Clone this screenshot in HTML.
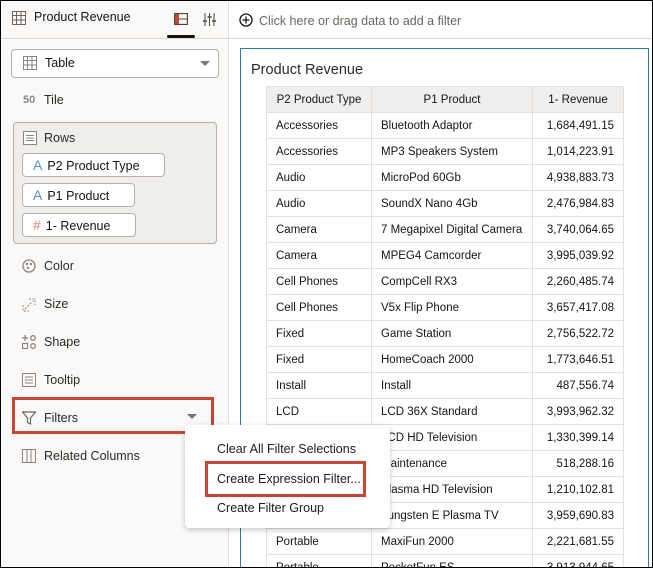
<!DOCTYPE html>
<html style="width:653px;height:568px;overflow:hidden"><head><style>
*{box-sizing:border-box;margin:0;padding:0}
body{width:653px;height:568px;overflow:hidden;font-family:"Liberation Sans",sans-serif;color:#161513;background:#fff;position:relative;font-size:12px}
.frame{position:absolute;left:0;top:0;width:653px;height:568px;border:1px solid #000;pointer-events:none;z-index:50}
.left{position:absolute;left:0;top:0;width:229px;height:568px;background:#fbf9f8;border-right:1px solid #e4e1dd}
.top{position:absolute;left:0;top:0;width:653px;height:39px;border-bottom:1px solid #d9d6d2}
.abs{position:absolute}
.lbl{position:absolute;left:44px;font-size:12.5px;color:#2c2a27}
.pill{position:absolute;left:22px;height:24px;border:1px solid #b5b0aa;border-radius:4px;background:#fff;font-size:12.5px;padding-left:10px;line-height:22px}
.pill b{font-weight:normal;color:#5c90c4;margin-right:5px;font-size:14px}
table{border-collapse:collapse;table-layout:fixed;width:357px;position:absolute;left:266px;top:86px;font-size:11.5px}
td,th{border:1px solid #e4e1dd;height:26px;padding:0 9px;font-weight:normal;white-space:nowrap;overflow:hidden}
th{background:#f1efed;text-align:center}
td.n{text-align:right}
.mi{position:absolute;left:217px;font-size:12.5px;color:#1d1c1a}
</style></head><body>
<div class="left"></div>
<div class="top"></div>
<svg class="abs" style="left:12px;top:11px" width="14" height="14"><rect x="0.5" y="0.5" width="13" height="13" fill="none" stroke="#6b6660"/><path d="M0 4.5H14M0 9H14M4.5 0V14M9 0V14" stroke="#6b6660"/></svg>
<div class="abs" style="left:34px;top:10px;font-size:12.5px">Product Revenue</div>
<svg class="abs" style="left:174px;top:13px" width="14" height="12"><rect x="0.5" y="0.5" width="13" height="11" fill="none" stroke="#4a4641" stroke-width="1.3"/><rect x="1" y="1" width="4" height="10" fill="#c74634"/><path d="M5 6H14" stroke="#4a4641"/></svg>
<div class="abs" style="left:167px;top:35px;width:28px;height:3px;background:#161513;border-radius:2px"></div>
<svg class="abs" style="left:203px;top:13px" width="13" height="13"><path d="M2 0V13M6.5 0V13M11 0V13" stroke="#4a4641"/><path d="M0 8H4M4.5 4H8.5M9 8H13" stroke="#4a4641" stroke-width="1.5"/></svg>
<svg class="abs" style="left:239px;top:13px" width="14" height="14"><circle cx="7" cy="7" r="6" fill="none" stroke="#161513" stroke-width="1.3"/><path d="M7 3.5V10.5M3.5 7H10.5" stroke="#161513" stroke-width="1.3"/></svg>
<div class="abs" style="left:259px;top:14px;font-size:12.5px;color:#6b6660">Click here or drag data to add a filter</div>
<div class="abs" style="left:11px;top:49px;width:208px;height:29px;border:1px solid #b5b0aa;border-radius:4px;background:#fff"></div>
<svg class="abs" style="left:23px;top:56px" width="14" height="14"><rect x="0.5" y="0.5" width="13" height="13" fill="none" stroke="#8a857f"/><path d="M0 4.5H14M0 9H14M4.5 0V14M9 0V14" stroke="#8a857f"/></svg>
<div class="abs" style="left:45px;top:56px;font-size:12.5px">Table</div>
<div class="abs" style="left:200px;top:61px;width:0;height:0;border-left:5px solid transparent;border-right:5px solid transparent;border-top:5px solid #7a756f"></div>
<div class="abs" style="left:23px;top:94px;font-size:11px;color:#8a857f;font-weight:bold">50</div>
<div class="lbl" style="top:93px">Tile</div>
<div class="abs" style="left:13px;top:122px;width:204px;height:122px;background:#f0eeeb;border:1px solid #b5b0aa;border-radius:4px"></div>
<svg class="abs" style="left:23px;top:131px" width="14" height="14"><rect x="0.5" y="0.5" width="13" height="13" fill="#fff" stroke="#8a857f"/><path d="M3 4.5H11M3 7H11M3 9.5H11" stroke="#8a857f"/></svg>
<div class="lbl" style="top:131px">Rows</div>
<div class="pill" style="top:153px;width:143px"><b>A</b>P2 Product Type</div>
<div class="pill" style="top:183px;width:113px"><b>A</b>P1 Product</div>
<div class="pill" style="top:213px;width:114px"><b style="color:#e0826a">#</b>1- Revenue</div>
<svg class="abs" style="left:22px;top:259px" width="14" height="14"><circle cx="7" cy="7" r="6" fill="none" stroke="#8a857f" stroke-width="1.3"/><circle cx="5" cy="5" r="1.2" fill="#8a857f"/><circle cx="9" cy="5" r="1.2" fill="#8a857f"/><circle cx="6" cy="9" r="1.2" fill="#8a857f"/></svg>
<div class="lbl" style="top:259px">Color</div>
<svg class="abs" style="left:22px;top:298px" width="14" height="14"><path d="M1 7V13H7M7 1H13V7M3 11L11 3" stroke="#8a857f" fill="none" stroke-dasharray="2 1.5"/></svg>
<div class="lbl" style="top:297px">Size</div>
<svg class="abs" style="left:22px;top:335px" width="14" height="14"><path d="M3 0V6M0 3H6" stroke="#8a857f" stroke-width="1.3"/><circle cx="11" cy="3" r="2.3" fill="none" stroke="#8a857f" stroke-width="1.3"/><rect x="0.5" y="8.5" width="5" height="5" fill="none" stroke="#8a857f" stroke-width="1.2"/><circle cx="11" cy="11" r="2.3" fill="none" stroke="#8a857f" stroke-width="1.3"/></svg>
<div class="lbl" style="top:335px">Shape</div>
<svg class="abs" style="left:22px;top:373px" width="14" height="14"><rect x="0.5" y="0.5" width="13" height="13" fill="none" stroke="#8a857f"/><path d="M3 4H11M3 7H11M3 10H11" stroke="#8a857f"/></svg>
<div class="lbl" style="top:373px">Tooltip</div>
<svg class="abs" style="left:22px;top:411px" width="14" height="14"><path d="M0.5 1H13.5L8.5 7V13L5.5 11.5V7Z" fill="none" stroke="#6b6660" stroke-width="1.2"/></svg>
<div class="lbl" style="top:411px">Filters</div>
<div class="abs" style="left:187px;top:414px;width:0;height:0;border-left:5px solid transparent;border-right:5px solid transparent;border-top:5px solid #7a756f"></div>
<div class="abs" style="left:12px;top:397px;width:202px;height:37px;border:3px solid #c74634"></div>
<svg class="abs" style="left:22px;top:449px" width="14" height="14"><rect x="0.5" y="0.5" width="13" height="13" fill="none" stroke="#8a857f"/><path d="M5 0V14M9 0V14" stroke="#8a857f"/></svg>
<div class="lbl" style="top:449px">Related Columns</div>
<div class="abs" style="left:240px;top:48px;width:409px;height:520px;border:1px solid #2a7f9e;border-bottom:none;background:#fff;overflow:hidden"></div>
<div class="abs" style="left:251px;top:62px;font-size:14.5px;color:#2c2a27">Product Revenue</div>
<div class="abs" style="left:0;top:0;width:653px;height:567px;overflow:hidden">
<table>
<colgroup><col style="width:105px"><col style="width:161px"><col style="width:91px"></colgroup>
<tr><th>P2 Product Type</th><th>P1 Product</th><th>1- Revenue</th></tr>
<tr><td>Accessories</td><td>Bluetooth Adaptor</td><td class="n">1,684,491.15</td></tr>
<tr><td>Accessories</td><td>MP3 Speakers System</td><td class="n">1,014,223.91</td></tr>
<tr><td>Audio</td><td>MicroPod 60Gb</td><td class="n">4,938,883.73</td></tr>
<tr><td>Audio</td><td>SoundX Nano 4Gb</td><td class="n">2,476,984.83</td></tr>
<tr><td>Camera</td><td>7 Megapixel Digital Camera</td><td class="n">3,740,064.65</td></tr>
<tr><td>Camera</td><td>MPEG4 Camcorder</td><td class="n">3,995,039.92</td></tr>
<tr><td>Cell Phones</td><td>CompCell RX3</td><td class="n">2,260,485.74</td></tr>
<tr><td>Cell Phones</td><td>V5x Flip Phone</td><td class="n">3,657,417.08</td></tr>
<tr><td>Fixed</td><td>Game Station</td><td class="n">2,756,522.72</td></tr>
<tr><td>Fixed</td><td>HomeCoach 2000</td><td class="n">1,773,646.51</td></tr>
<tr><td>Install</td><td>Install</td><td class="n">487,556.74</td></tr>
<tr><td>LCD</td><td>LCD 36X Standard</td><td class="n">3,993,962.32</td></tr>
<tr><td>LCD</td><td>LCD HD Television</td><td class="n">1,330,399.14</td></tr>
<tr><td>Maintenance</td><td>Maintenance</td><td class="n">518,288.16</td></tr>
<tr><td>Plasma</td><td>Plasma HD Television</td><td class="n">1,210,102.81</td></tr>
<tr><td>Plasma</td><td>Tungsten E Plasma TV</td><td class="n">3,959,690.83</td></tr>
<tr><td>Portable</td><td>MaxiFun 2000</td><td class="n">2,221,681.55</td></tr>
<tr><td>Portable</td><td>PocketFun ES</td><td class="n">3,913,944.65</td></tr>
</table>
</div>
<div class="abs" style="left:185px;top:425px;width:205px;height:103px;background:#fff;border-radius:4px;box-shadow:0 2px 6px rgba(0,0,0,0.22)"></div>
<div class="mi" style="top:442px">Clear All Filter Selections</div>
<div class="mi" style="top:472px">Create Expression Filter...</div>
<div class="mi" style="top:501px">Create Filter Group</div>
<div class="abs" style="left:205px;top:461px;width:161px;height:36px;border:3px solid #c74634"></div>
<div class="frame"></div>
</body></html>
